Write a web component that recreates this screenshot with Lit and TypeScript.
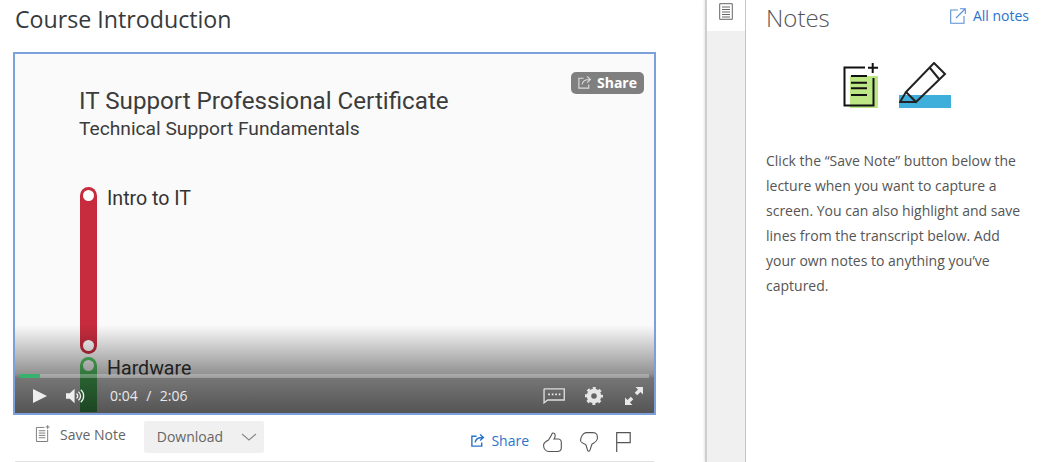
import { LitElement, html, css } from "lit";
import { customElement } from "lit/decorators.js";

@customElement("app-root")
export class AppRoot extends LitElement {
  static styles = css`
    :host { display: block; width: 1052px; height: 462px; overflow: hidden; background: #fff; font-family: "Open Sans", sans-serif; color: #333; }
    * { box-sizing: border-box; }
    .page { display: flex; height: 462px; }
    .main { width: 705px; padding: 0 49px 0 13px; flex: none; }
    h1 { margin: 0; padding: 1px 0 0 2px; height: 52px; font-size: 23.2px; font-weight: 400; line-height: 36px; color: #373a3c; }
    .video { position: relative; width: 643px; height: 363px; border: 2px solid #7ba0dc; background: #fafafa; overflow: hidden; }
    .t1 { position: absolute; left: 64px; top: 31px; font: 400 24.2px/32px Roboto, sans-serif; color: #3c3c3c; white-space: nowrap; }
    .t2 { position: absolute; left: 64px; top: 63px; font: 400 19.2px/24px Roboto, sans-serif; color: #3c3c3c; white-space: nowrap; }
    .t3 { position: absolute; left: 92px; font: 400 19.6px/26px Roboto, sans-serif; color: #333; white-space: nowrap; }
    .red { position: absolute; left: 65px; top: 133px; width: 17px; height: 167px; border-radius: 9px; background: #c62c3d; }
    .green { position: absolute; left: 65px; top: 303px; width: 17px; height: 70px; border-radius: 9px 9px 0 0; background: #55cc66; }
    .dot { position: absolute; left: 68px; width: 11px; height: 11px; border-radius: 50%; background: #fff; }
    .shade { position: absolute; left: 0; right: 0; bottom: 1px; height: 87px; background: linear-gradient(to bottom, rgba(0,0,0,0) 0%, rgba(0,0,0,.416) 56%, rgba(0,0,0,.53) 61%, rgba(0,0,0,.66) 100%); }
    .base { position: absolute; left: 0; right: 0; bottom: 0; height: 1px; background: #555; }
    .badge { position: absolute; right: 10px; top: 18px; height: 22px; width: 73px; border-radius: 5px; background: #7f7f7f; color: #fff; display: flex; align-items: center; gap: 5px; padding: 0 0 1px 6px; font-size: 14px; font-weight: 700; }
    .controls { position: absolute; left: 5px; right: 5px; bottom: 0; height: 39px; }
    .track { height: 4px; background: rgba(255,255,255,.28); }
    .track div { width: 20px; height: 4px; background: #37b26c; }
    .ctl { display: flex; align-items: center; height: 35px; color: #eee; padding: 0 6px 0 13px; }
    .time { margin-left: 24px; font-size: 14px; word-spacing: 0.6px; color: #e9e9e9; white-space: pre; }
    .sp { flex: 1; }
    .ctl svg { display: block; flex: none; }
    .speaker { margin-left: 19px; }
    .gear { margin-left: 20px; }
    .full { margin-left: 22px; }
    .bar { display: flex; align-items: flex-start; height: 47px; width: 639px; margin-left: 2px; border-bottom: 1px solid #e3e3e3; padding-left: 20px; }
    .save { display: flex; align-items: center; gap: 10px; font-size: 14px; color: #666; margin-top: 10px; height: 18px; }
    .dl { margin: 6px 0 0 18px; width: 120px; height: 32px; background: #f0f0f0; border-radius: 2px; display: flex; align-items: center; justify-content: space-between; padding: 0 7px 2px 13px; font-size: 14px; color: #666; }
    .dl svg { margin-top: 2px; }
    .share { margin: 16px 0 0 auto; display: flex; align-items: center; gap: 6px; color: #2a73cc; font-size: 14px; }
    .acts { display: flex; align-items: center; gap: 18px; margin: 17px 23px 0 14px; }
    .acts svg, .save svg, .share svg, .dl svg { display: block; flex: none; }
    .rail { width: 41px; flex: none; height: 462px; background: #f0f0f0; border-left: 2px solid #cfcfcf; border-right: 1px solid #c6c6c6; box-shadow: -1px 0 2px rgba(0,0,0,.1); }
    .tab { height: 31px; background: #fff; display: flex; justify-content: center; padding-top: 3px; }
    .notes { flex: 1; padding: 0 23px 0 20px; }
    .nhead { display: flex; align-items: center; justify-content: space-between; height: 34px; }
    .nhead h2 { margin: 0; font-size: 24px; font-weight: 300; color: #555; }
    .all { display: flex; align-items: center; gap: 7px; font-size: 14px; color: #2a73cc; margin-bottom: 3px; }
    .pics { display: flex; justify-content: center; gap: 20px; padding: 28px 2px 0 0; height: 114px; }
    .pics svg { display: block; flex: none; }
    p { margin: 0; font-size: 14px; line-height: 25px; color: #555; }
  `;

  render() {
    return html`<div class="page">
      <section class="main">
        <h1>Course Introduction</h1>
        <div class="video">
          <div class="t1">IT Support Professional Certificate</div>
          <div class="t2">Technical Support Fundamentals</div>
          <div class="red"></div>
          <div class="dot" style="top:136px"></div>
          <div class="dot" style="top:286px"></div>
          <div class="t3" style="top:132px">Intro to IT</div>
          <div class="green"></div>
          <div class="dot" style="top:306px"></div>
          <div class="t3" style="top:302px">Hardware</div>
          <div class="shade"></div>
          <div class="base"></div>
          <div class="badge">
            <svg width="15" height="15" viewBox="0 0 16 16" fill="none" stroke="#ddd" stroke-width="1.2"><path d="M7 3.5H2v10.5h10.5V10"/><path d="M5.5 10c.5-3.5 3-5.2 8-5.2M10.8 1.5l3.5 3.3-3.5 3.3"/></svg>
            <span>Share</span>
          </div>
          <div class="controls">
            <div class="track"><div></div></div>
            <div class="ctl">
              <svg width="14" height="14" viewBox="0 0 14 14"><path d="M0 0l14 7-14 7z" fill="#eee"/></svg>
              <svg class="speaker" width="20" height="16" viewBox="0 0 21 16" fill="none"><path d="M0 5h4l5-4.500v15L4 11H0z" fill="#eee"/><path d="M11 5.500a3 3 0 010 5M13 3.500a5.500 5.500 0 010 9M15.500 1.500a8.500 8.500 0 010 13" stroke="#eee" stroke-width="1.400"/></svg>
              <span class="time">0:04  /  2:06</span>
              <span class="sp"></span>
              <svg width="22" height="16" viewBox="0 0 21 15" fill="none"><path d="M.7.7h19.600v10.600H4.500L1 14V.7z" stroke="#ddd" stroke-width="1.300"/><path d="M5 6h1.600M8.400 6H10M11.700 6h1.600M15 6h1.600" stroke="#eee" stroke-width="1.800"/></svg>
              <svg class="gear" width="18" height="18" viewBox="0 0 24 24" fill="none" stroke="#e6e6e6"><circle cx="12" cy="12" r="6.700" stroke-width="6"/><circle cx="12" cy="12" r="10.500" stroke-width="3" stroke-dasharray="4.100 4.147" stroke-dashoffset="2"/></svg>
              <svg class="full" width="18" height="18" viewBox="0 0 18 18" fill="#e8e8e8"><path d="M10.500 0H18v7.500l-2.500-2.500-3.300 3.300-2.500-2.500L13 2.500zM0 18v-7.500l2.500 2.500 3.300-3.300 2.500 2.500L5 15.500l2.500 2.500z"/></svg>
            </div>
          </div>
        </div>
        <div class="bar">
          <div class="save">
            <svg width="15" height="18" viewBox="0 0 16 19" fill="none" stroke="#777"><path d="M10 2.500H1.500v15h12V5"/><path d="M4 6h7M4 8.500h7M4 11h7M4 13.500h7M13.500 0v4M11.500 2h4"/></svg>
            <span>Save Note</span>
          </div>
          <div class="dl"><span>Download</span>
            <svg width="16" height="8" viewBox="0 0 16 8" fill="none" stroke="#888" stroke-width="1.100"><path d="M1 1l7 6 7-6"/></svg>
          </div>
          <div class="share">
            <svg width="15" height="15" viewBox="0 0 16 16" fill="none" stroke="#2a73cc" stroke-width="1.500"><path d="M7 3.500H2v10.500h10.500V10"/><path d="M5.500 10c.5-3.500 3-5.200 8-5.200M10.800 1.500l3.500 3.300-3.500 3.300"/></svg>
            <span>Share</span>
          </div>
          <div class="acts">
            <svg width="19" height="20" viewBox="0 0 19 20" fill="none" stroke="#555" stroke-width="1.100"><path d="M.6 13C.6 10.500 3.500 9 5.500 8L8.500 3C9 1 10.500.4 11.500 1.500 12.500 3 12 5.500 11 7h4.500c2 0 3 2 2.800 4v5c0 2.500-2 3.500-4.300 3.500H6C3 19.500.4 17 .6 13z"/></svg>
            <svg width="18" height="20" viewBox="0 0 18 20" fill="none" stroke="#555" stroke-width="1.100"><path d="M.6 9C.4 5 3 1 6 .6h7C16.500.6 17.800 3 17.300 7 16.800 10 14.500 10.500 12 12l-2 6c-1 2-2 1.500-2.500 0L6 13C4 11 1 11 .6 9z"/></svg>
            <svg width="15" height="20" viewBox="0 0 15 20" fill="none" stroke="#555" stroke-width="1.200"><path d="M.7 20V.7h13.500v10H.7"/></svg>
          </div>
        </div>
      </section>
      <aside class="rail">
        <div class="tab">
          <svg width="14" height="18" viewBox="0 0 14 18" fill="none" stroke="#666" stroke-width="1"><path d="M.7.7h12.600v15.600H.7z"/><path d="M3 4h8M3 6.500h8M3 9h8M3 11.500h8M3 14h8"/></svg>
        </div>
      </aside>
      <section class="notes">
        <div class="nhead">
          <h2>Notes</h2>
          <div class="all">
            <svg width="16" height="16" viewBox="0 0 16 16" fill="none" stroke="#5a8fd8" stroke-width="1.100"><path d="M8 2H.7v13.300H14V8M6 10l9-9M10 .7h5.300V6"/></svg>
            <span>All notes</span>
          </div>
        </div>
        <div class="pics">
          <svg width="36" height="46" viewBox="0 0 36 46" fill="none"><rect x="7" y="14" width="28" height="32" fill="#bce784"/><path d="M22 5.500H1.500V43.500H30.500V16" stroke="#111" stroke-width="2"/><path d="M8 14h16M8 20.700h16M8 26.300h16M8 33h16M25 5.700h10M29.700 1v10" stroke="#111" stroke-width="2"/></svg>
          <svg width="52" height="46" viewBox="0 0 52 46"><rect y="33" width="52" height="13" fill="#3eaedb"/><path d="M35 1L46 12 17 40 7 30zM31 6l9 11M7 30L1 40H17" fill="none" stroke="#222" stroke-width="2"/></svg>
        </div>
        <p>Click the “Save Note” button below the lecture when you want to capture a screen. You can also highlight and save lines from the transcript below. Add your own notes to anything you’ve captured.</p>
      </section>
    </div>`;
  }
}
